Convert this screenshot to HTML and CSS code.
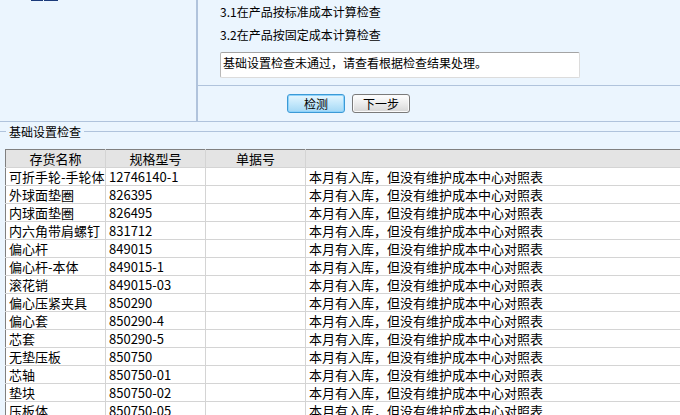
FILE: index.html
```html
<!DOCTYPE html>
<html lang="zh-CN">

<head>
    <meta charset="UTF-8">
    <title>基础设置检查</title>
    <link rel="stylesheet" href="styles.css">
</head>

<body>
    <div class="page">
        <!-- 上部：步骤说明 -->
        <div class="top">
            <div class="side">
                <span class="nav-mark w12"></span>
                <span class="nav-mark w14"></span>
            </div>
            <div class="main">
                <div class="steps">
                    <div class="step">3.1在产品按标准成本计算检查</div>
                    <div class="step">3.2在产品按固定成本计算检查</div>
                    <div class="result-box">基础设置检查未通过，请查看根据检查结果处理。</div>
                </div>
                <div class="actions">
                    <button class="btn btn-focus">检测</button>
                    <button class="btn">下一步</button>
                </div>
            </div>
        </div>

        <!-- 检查结果 -->
        <div class="group-title">
            <span class="group-line short"></span>
            <span class="group-text">基础设置检查</span>
            <span class="group-line"></span>
        </div>

        <table class="grid">
            <colgroup>
                <col class="c1">
                <col class="c2">
                <col class="c3">
                <col class="c4">
            </colgroup>
            <thead>
                <tr>
                    <th>存货名称</th>
                    <th>规格型号</th>
                    <th>单据号</th>
                    <th></th>
                </tr>
            </thead>
            <tbody>
                <tr><td>可折手轮-手轮体</td><td>12746140-1</td><td></td><td>本月有入库，但没有维护成本中心对照表</td></tr>
                <tr><td>外球面垫圈</td><td>826395</td><td></td><td>本月有入库，但没有维护成本中心对照表</td></tr>
                <tr><td>内球面垫圈</td><td>826495</td><td></td><td>本月有入库，但没有维护成本中心对照表</td></tr>
                <tr><td>内六角带肩螺钉</td><td>831712</td><td></td><td>本月有入库，但没有维护成本中心对照表</td></tr>
                <tr><td>偏心杆</td><td>849015</td><td></td><td>本月有入库，但没有维护成本中心对照表</td></tr>
                <tr><td>偏心杆-本体</td><td>849015-1</td><td></td><td>本月有入库，但没有维护成本中心对照表</td></tr>
                <tr><td>滚花销</td><td>849015-03</td><td></td><td>本月有入库，但没有维护成本中心对照表</td></tr>
                <tr><td>偏心压紧夹具</td><td>850290</td><td></td><td>本月有入库，但没有维护成本中心对照表</td></tr>
                <tr><td>偏心套</td><td>850290-4</td><td></td><td>本月有入库，但没有维护成本中心对照表</td></tr>
                <tr><td>芯套</td><td>850290-5</td><td></td><td>本月有入库，但没有维护成本中心对照表</td></tr>
                <tr><td>无垫压板</td><td>850750</td><td></td><td>本月有入库，但没有维护成本中心对照表</td></tr>
                <tr><td>芯轴</td><td>850750-01</td><td></td><td>本月有入库，但没有维护成本中心对照表</td></tr>
                <tr><td>垫块</td><td>850750-02</td><td></td><td>本月有入库，但没有维护成本中心对照表</td></tr>
                <tr><td>压板体</td><td>850750-05</td><td></td><td>本月有入库，但没有维护成本中心对照表</td></tr>
            </tbody>
        </table>
    </div>
</body>

</html>
```

FILE: styles.css
```css
:root {
    --bg-color: #ebf5fe;
    --line-color: #b0c3dc;
    --grid-line: #d4d4d4;
}

html,
body {
    margin: 0;
    padding: 0;
}

body {
    width: 680px;
    height: 415px;
    overflow: hidden;
    background-color: var(--bg-color);
    color: #000;
    font-family: "Noto Sans CJK SC", "DejaVu Sans", sans-serif;
    font-size: 12px;
}

.page {
    width: 680px;
}

.top {
    display: flex;
    height: 121px;
    border-bottom: 1px solid var(--line-color);
}

.side {
    width: 198px;
    border-right: 2px solid var(--line-color);
    display: flex;
    align-items: flex-start;
    gap: 1px;
    padding-left: 31px;
    box-sizing: border-box;
}

.nav-mark {
    display: block;
    height: 1px;
    background-color: #1b3a7a;
}

.nav-mark.w12 {
    width: 12px;
}

.nav-mark.w14 {
    width: 14px;
}

.main {
    flex: 1;
    display: flex;
    flex-direction: column;
}

.steps {
    height: 85px;
    padding-left: 22px;
    box-sizing: border-box;
}

.step {
    height: 23px;
    line-height: 23px;
    white-space: nowrap;
}

.result-box {
    margin-top: 6px;
    width: 360px;
    height: 26px;
    box-sizing: border-box;
    background-color: #fff;
    border: 1px solid #dcdcdc;
    border-top-color: #a4a4a4;
    border-left-color: #b8b8b8;
    border-radius: 2px;
    padding: 0 2px;
    line-height: 20px;
    white-space: nowrap;
}

.actions {
    flex: 1;
    border-top: 1px solid var(--line-color);
    display: flex;
    align-items: flex-start;
    gap: 7px;
    padding: 8px 0 0 89px;
}

.btn {
    width: 58px;
    height: 19px;
    padding: 0;
    margin: 0;
    font-family: "Noto Sans CJK SC", sans-serif;
    font-size: 12px;
    line-height: 15px;
    color: #000;
    border: 1px solid #7a7a7a;
    border-radius: 3px;
    background: linear-gradient(#ffffff, #ececec 50%, #d6d6d6);
    box-shadow: inset 0 0 0 1px #fafafa;
}

.btn-focus {
    border-color: #3c9ad6;
    background: linear-gradient(#e6f6fe, #c4e8fb 50%, #a4d8f5);
    box-shadow: inset 0 0 0 1px #8fd3fb;
}

.group-title {
    display: flex;
    align-items: center;
    height: 19px;
    margin-bottom: 8px;
}

.group-line {
    flex: 1;
    height: 1px;
    background-color: var(--line-color);
}

.group-line.short {
    flex: 0 0 6px;
}

.group-text {
    padding: 0 3px;
    line-height: 19px;
}

.grid {
    margin-left: 5px;
    width: 700px;
    table-layout: fixed;
    border-collapse: collapse;
    background-color: #fff;
    font-size: 13px;
}

.grid col.c1,
.grid col.c2,
.grid col.c3 {
    width: 100px;
}

.grid th,
.grid td {
    height: 17px;
    padding: 0 0 0 3px;
    line-height: 17px;
    border: 1px solid var(--grid-line);
    white-space: nowrap;
    overflow: hidden;
    text-align: left;
    font-weight: normal;
}

.grid th {
    background-color: #e4e4e4;
    text-align: center;
    padding: 0;
    border-top-color: #808080;
}

.grid tr > :first-child {
    border-left-color: #808080;
}
```
